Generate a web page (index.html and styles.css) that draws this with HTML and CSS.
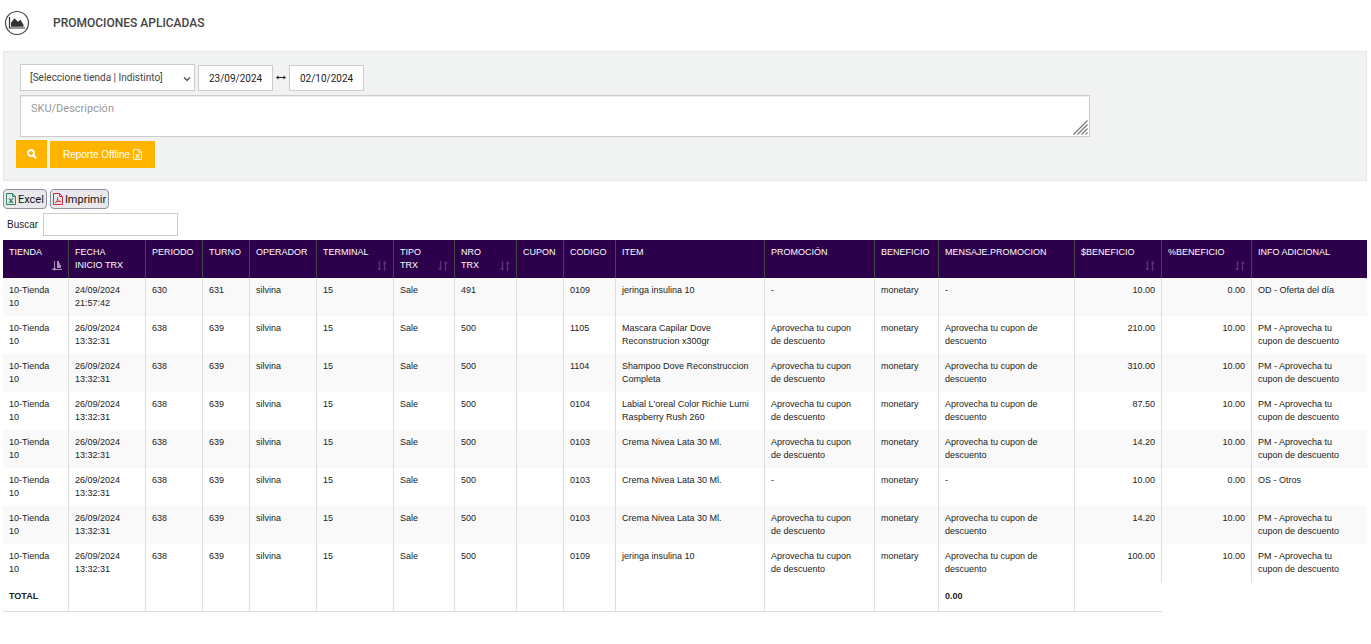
FILE: index.html
```html
<!DOCTYPE html>
<html lang="es">
<head>
<meta charset="utf-8">
<title>Promociones aplicadas</title>
<link rel="stylesheet" href="styles.css">
</head>
<body>
<svg class="defs" width="0" height="0" aria-hidden="true">
  <symbol id="sort" viewBox="0 0 10 10"><path d="M2.500 0v9M7.500 10V1" fill="none" stroke="currentColor" stroke-width="1.400"/><path d="M0 7h4L2.500 9.500zM6 2.500h4L7.500 0z" fill="currentColor"/></symbol>
  <symbol id="sort-asc" viewBox="0 0 10 10"><path d="M2.500 0v9M0 8.500h10" fill="none" stroke="currentColor"/><path d="M5 0h2v7h-2zM7 2h1v5h-1zM8 4h1v3h-1zM1 7h3l-1.500 3z" fill="currentColor"/></symbol>
  <symbol id="file-x" viewBox="0 0 10 12"><path d="M.5.5h6l3 3v8h-9zM6.500.5v3h3" fill="none" stroke="currentColor"/><path d="M3.500 6l3 3.500M6.500 6l-3 3.500" fill="none" stroke="currentColor" stroke-width="1.200"/><path d="M2.500 5.800h2M5.800 5.800h1.700M2.500 9.700h1.700M5.500 9.700h2" fill="none" stroke="currentColor" stroke-width=".7"/></symbol>
  <symbol id="file-pdf" viewBox="0 0 10 12"><path d="M.5.5h6l3 3v8h-9zM6.500.5v3h3" fill="none" stroke="currentColor"/><path d="M2 10C4 9 5 6 4.500 4M4.500 5.500C5 8 6 8.500 8 8.500M2.500 9.500C4 8.500 6 8 8 8.500" fill="none" stroke="currentColor" stroke-width=".8"/></symbol>
</svg>

<header class="page-head">
  <svg class="page-icon" viewBox="0 0 26 26" aria-hidden="true">
    <circle cx="13" cy="13" r="11.500" fill="none" stroke="#444" stroke-width="1.200"/>
    <path d="M5.500 7v11H21" fill="none" stroke="#333" stroke-width="1.200"/>
    <path d="M7 16.800v-4l3.500-4.500 3.500 3.500 2.500-2 3 5v2z" fill="#333"/>
  </svg>
  <h1>PROMOCIONES APLICADAS</h1>
</header>

<form class="filters">
  <div class="filter-row">
    <div class="select-wrap">
      <select aria-label="Tienda"><option>[Seleccione tienda | Indistinto]</option></select>
      <svg class="caret" viewBox="0 0 8 6" aria-hidden="true"><path d="M1 1.500l3 3 3-3" fill="none" stroke="#444" stroke-width="1.200"/></svg>
    </div>
    <input class="date" type="text" value="23/09/2024" aria-label="Desde">
    <svg class="range" viewBox="0 0 10 6" aria-hidden="true"><path d="M1 2.500h8" stroke="#222"/><path d="M0 2.500l2.500-2v4zM10 2.500L7.500.5v4z" fill="#222"/></svg>
    <input class="date" type="text" value="02/10/2024" aria-label="Hasta">
  </div>
  <div class="sku">
    <textarea placeholder="SKU/Descripción" aria-label="SKU/Descripción"></textarea>
    <svg class="grip" viewBox="0 0 15 15" aria-hidden="true"><path d="M.5 14.500l14-14M4.500 14.500l10-10M8.500 14.500l6-6M12.500 14.500l2-2" stroke="#777" stroke-width="1.200"/></svg>
  </div>
  <div class="actions">
    <button class="btn search" type="button" aria-label="Buscar">
      <svg viewBox="0 0 10 10" aria-hidden="true"><circle cx="4" cy="4" r="3" fill="none" stroke="#fff" stroke-width="1.800"/><path d="M6.200 6.200l3 3" stroke="#fff" stroke-width="2"/></svg>
    </button>
    <button class="btn report" type="button">Reporte Offline <svg class="file" aria-hidden="true"><use href="#file-x"/></svg></button>
  </div>
</form>

<div class="exports">
  <button type="button"><svg class="file green" aria-hidden="true"><use href="#file-x"/></svg>Excel</button>
  <button type="button"><svg class="file red" aria-hidden="true"><use href="#file-pdf"/></svg>Imprimir</button>
</div>
<div class="finder">
  <label for="q">Buscar</label>
  <input id="q" type="search">
</div>

<div class="table-wrap">
<table>
  <colgroup>
    <col class="c66"><col class="c77"><col class="c57"><col class="c47"><col class="c67"><col class="c77"><col class="c61"><col class="c62"><col class="c47"><col class="c52"><col class="c149"><col class="c110"><col class="c64"><col class="c136"><col class="c87"><col class="c90"><col>
  </colgroup>
  <thead>
    <tr>
      <th class="sortable active">TIENDA<svg aria-hidden="true"><use href="#sort-asc"/></svg></th>
      <th>FECHA INICIO&nbsp;TRX</th><th>PERIODO</th><th>TURNO</th><th>OPERADOR</th>
      <th class="sortable">TERMINAL<svg aria-hidden="true"><use href="#sort"/></svg></th>
      <th class="sortable">TIPO TRX<svg aria-hidden="true"><use href="#sort"/></svg></th>
      <th class="sortable">NRO TRX<svg aria-hidden="true"><use href="#sort"/></svg></th>
      <th>CUPON</th><th>CODIGO</th><th>ITEM</th><th>PROMOCIÓN</th><th>BENEFICIO</th><th>MENSAJE.PROMOCION</th>
      <th class="sortable">$BENEFICIO<svg aria-hidden="true"><use href="#sort"/></svg></th>
      <th class="sortable">%BENEFICIO<svg aria-hidden="true"><use href="#sort"/></svg></th>
      <th>INFO ADICIONAL</th>
    </tr>
  </thead>
  <tbody>
    <tr><td class="store">10-Tienda 10</td><td>24/09/2024 21:57:42</td><td>630</td><td>631</td><td>silvina</td><td>15</td><td>Sale</td><td>491</td><td></td><td>0109</td><td>jeringa insulina 10</td><td>-</td><td>monetary</td><td>-</td><td class="num">10.00</td><td class="num">0.00</td><td class="info">OD - Oferta del día</td></tr>
    <tr><td class="store">10-Tienda 10</td><td>26/09/2024 13:32:31</td><td>638</td><td>639</td><td>silvina</td><td>15</td><td>Sale</td><td>500</td><td></td><td>1105</td><td>Mascara Capilar Dove Reconstrucion x300gr</td><td>Aprovecha tu cupon de&nbsp;descuento</td><td>monetary</td><td>Aprovecha tu cupon de descuento</td><td class="num">210.00</td><td class="num">10.00</td><td class="info">PM - Aprovecha tu cupon de descuento</td></tr>
    <tr><td class="store">10-Tienda 10</td><td>26/09/2024 13:32:31</td><td>638</td><td>639</td><td>silvina</td><td>15</td><td>Sale</td><td>500</td><td></td><td>1104</td><td>Shampoo Dove Reconstruccion Completa</td><td>Aprovecha tu cupon de&nbsp;descuento</td><td>monetary</td><td>Aprovecha tu cupon de descuento</td><td class="num">310.00</td><td class="num">10.00</td><td class="info">PM - Aprovecha tu cupon de descuento</td></tr>
    <tr><td class="store">10-Tienda 10</td><td>26/09/2024 13:32:31</td><td>638</td><td>639</td><td>silvina</td><td>15</td><td>Sale</td><td>500</td><td></td><td>0104</td><td>Labial L'oreal Color Richie Lumi Raspberry Rush 260</td><td>Aprovecha tu cupon de&nbsp;descuento</td><td>monetary</td><td>Aprovecha tu cupon de descuento</td><td class="num">87.50</td><td class="num">10.00</td><td class="info">PM - Aprovecha tu cupon de descuento</td></tr>
    <tr><td class="store">10-Tienda 10</td><td>26/09/2024 13:32:31</td><td>638</td><td>639</td><td>silvina</td><td>15</td><td>Sale</td><td>500</td><td></td><td>0103</td><td>Crema Nivea Lata 30 Ml.</td><td>Aprovecha tu cupon de&nbsp;descuento</td><td>monetary</td><td>Aprovecha tu cupon de descuento</td><td class="num">14.20</td><td class="num">10.00</td><td class="info">PM - Aprovecha tu cupon de descuento</td></tr>
    <tr><td class="store">10-Tienda 10</td><td>26/09/2024 13:32:31</td><td>638</td><td>639</td><td>silvina</td><td>15</td><td>Sale</td><td>500</td><td></td><td>0103</td><td>Crema Nivea Lata 30 Ml.</td><td>-</td><td>monetary</td><td>-</td><td class="num">10.00</td><td class="num">0.00</td><td class="info">OS - Otros</td></tr>
    <tr><td class="store">10-Tienda 10</td><td>26/09/2024 13:32:31</td><td>638</td><td>639</td><td>silvina</td><td>15</td><td>Sale</td><td>500</td><td></td><td>0103</td><td>Crema Nivea Lata 30 Ml.</td><td>Aprovecha tu cupon de&nbsp;descuento</td><td>monetary</td><td>Aprovecha tu cupon de descuento</td><td class="num">14.20</td><td class="num">10.00</td><td class="info">PM - Aprovecha tu cupon de descuento</td></tr>
    <tr><td class="store">10-Tienda 10</td><td>26/09/2024 13:32:31</td><td>638</td><td>639</td><td>silvina</td><td>15</td><td>Sale</td><td>500</td><td></td><td>0109</td><td>jeringa insulina 10</td><td>Aprovecha tu cupon de&nbsp;descuento</td><td>monetary</td><td>Aprovecha tu cupon de descuento</td><td class="num">100.00</td><td class="num">10.00</td><td class="info">PM - Aprovecha tu cupon de descuento</td></tr>
  </tbody>
  <tfoot>
    <tr><td>TOTAL</td><td></td><td></td><td></td><td></td><td></td><td></td><td></td><td></td><td></td><td></td><td></td><td></td><td>0.00</td><td></td></tr>
  </tfoot>
</table>
</div>
</body>
</html>
```
FILE: styles.css
```css
* { box-sizing: border-box; }
body {
  margin: 0;
  padding: 0 4px 0 3px;
  background: #fff;
  color: #222;
  font-family: Roboto, "Liberation Sans", sans-serif;
  font-size: 11px;
}
button, input, select, textarea { font: inherit; color: inherit; margin: 0; }
.defs { position: absolute; }

.page-head { display: flex; align-items: center; gap: 23px; height: 51px; padding: 0 0 6px 1px; }
.page-icon { width: 26px; height: 26px; }
.page-head h1 { margin: 0; font-size: 12px; font-weight: 500; color: #444; }

.filters {
  display: flex;
  flex-direction: column;
  gap: 4px;
  padding: 12px 16px;
  border: 1px solid #e4e7e6;
  background: #f0f3f2;
}
.filter-row { display: flex; align-items: flex-end; gap: 3px; }
.select-wrap, .sku { position: relative; }
.select-wrap select {
  appearance: none;
  display: block;
  width: 175px;
  height: 27px;
  padding: 0 16px 0 9px;
  border: 1px solid #ccc;
  border-radius: 0;
  background: #fff;
  color: #444;
  font-size: 10px;
}
.caret { position: absolute; right: 4px; top: 12px; width: 8px; height: 6px; }
.date { width: 75px; height: 26px; padding: 0 10px; border: 1px solid #ccc; background: #fff; font-size: 10px; }
.range { width: 10px; height: 26px; }
.sku { width: 100%; max-width: 1070px; }
.sku textarea {
  display: block;
  width: 100%;
  height: 42px;
  padding: 6px 10px;
  border: 1px solid #ccc;
  box-shadow: inset 0 1px 1px rgba(0, 0, 0, .075);
  background: #fff;
  line-height: 13px;
  resize: none;
}
.sku textarea::placeholder { color: #999; }
.grip { position: absolute; right: 2px; bottom: 2px; width: 15px; height: 15px; }
.actions { display: flex; align-items: flex-end; gap: 3px; margin: -1px 0 0 -4px; }
.btn {
  display: flex;
  align-items: center;
  justify-content: center;
  gap: 3px;
  height: 27px;
  padding: 0 10px;
  border: 0;
  background: #ffb400;
  color: #fff;
}
.search { width: 31px; height: 28px; }
.search svg { width: 10px; height: 10px; }
.report { min-width: 105px; font-family: "Liberation Sans", sans-serif; font-size: 10px; }
.file { flex: none; width: 10px; height: 12px; }
.report .file { width: 9px; height: 11px; }
.green { color: #2e8465; }
.red { color: #d1293d; }

.exports { display: flex; gap: 3px; margin-top: 8px; }
.exports button {
  display: flex;
  align-items: center;
  gap: 2px;
  height: 20px;
  padding: 0 2px;
  border: 1px solid #8f8f9d;
  border-radius: 4px;
  background: #e9e9ed;
  color: #111;
}
.finder { display: flex; align-items: center; gap: 4px; margin: 4px 0 4px 4px; font-size: 10px; font-family: "Liberation Sans", sans-serif; }
.finder label { width: 32px; }
.finder input { width: 135px; height: 23px; padding: 0 6px; border: 1px solid #ccc; background: #fff; appearance: none; }

.table-wrap { overflow-x: auto; }
table {
  width: 100%;
  table-layout: fixed;
  border-collapse: separate;
  border-spacing: 0;
  font-family: "Liberation Sans", sans-serif;
  font-size: 9px;
  line-height: 13px;
}
.c47 { width: 47px; } .c52 { width: 52px; } .c57 { width: 57px; } .c61 { width: 61px; }
.c62 { width: 62px; } .c64 { width: 64px; } .c66 { width: 66px; } .c67 { width: 67px; }
.c77 { width: 77px; } .c87 { width: 87px; } .c90 { width: 90px; } .c110 { width: 110px; }
.c136 { width: 136px; } .c149 { width: 149px; }
th, td { padding: 6px; text-align: left; vertical-align: top; border-right: 1px solid #ddd; }
th { background: #2d004b; color: #fff; font-weight: 400; border-right-color: #444; }
th:last-child, tbody td:last-child, tfoot td:last-child { border-right: 0; }
.sortable { position: relative; padding-right: 20px; }
.sortable svg { position: absolute; right: 6px; bottom: 7px; width: 10px; height: 10px; color: #56337a; }
.active svg { color: #a68fb8; }
tbody tr:nth-child(odd) td { background: #f9f9f9; }
.store { padding-right: 12px; }
.info { padding-right: 16px; }
.num { text-align: right; }
tfoot td { height: 30px; padding: 8px 6px; font-weight: 700; border-bottom: 1px solid #ddd; }
```
